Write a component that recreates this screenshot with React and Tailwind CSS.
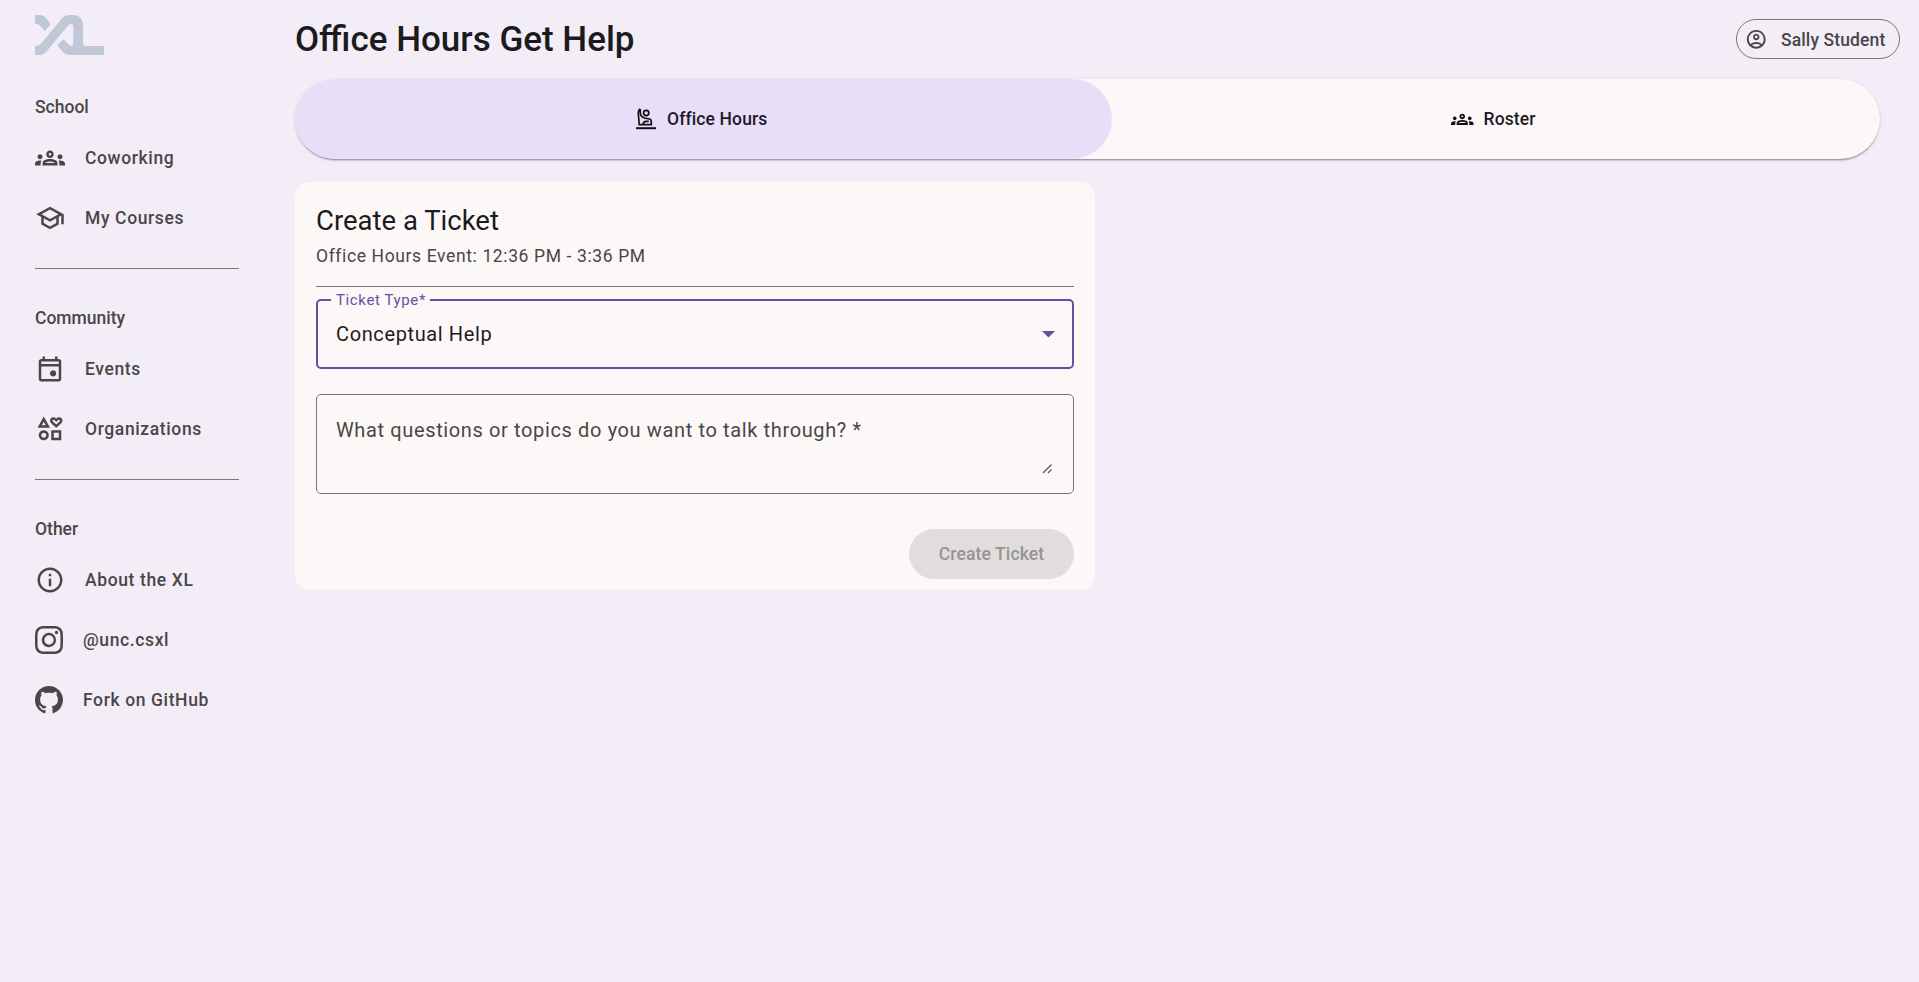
import { MdOutlineGroups, MdOutlineSchool, MdOutlineInterests, MdOutlineInfo, MdOutlineAccountCircle } from "react-icons/md";
import { BsInstagram, BsGithub } from "react-icons/bs";

function Logo() {
  return (
    <svg width="69" height="40" viewBox="0 0 69 40" fill="#c0c8d8" className="block">
      <path d="M0 0H4.5C8 0 9.8 1.6 11.3 3.4L15.8 9.2L10 16L4.6 10.6C3.4 9.4 2.4 9 0 9Z" />
      <path d="M0 40H4.5C7.500 40 9.500 38.800 11.500 36.500L32.500 11.300C34 9.500 35 9 36 9C37.500 9 38.300 10 38.300 11.500V28C38.300 30 37.300 30.800 36 30.800C35 30.800 34.300 30.400 33.500 29.600L28.500 24L22.300 30.600L27.300 36.500C29.500 39 32 40 35 40H69V31H51C49 31 48 30 48 28V10C48 4 44 0 38 0H34.500C31 0 29 1.200 27 3.500L6.500 28C4.500 30.400 3 31 0 31Z" />
    </svg>
  );
}

function EventIcon() {
  return (
    <svg width="30" height="30" viewBox="0 0 24 24" fill="currentColor">
      <path d="M14.500 18Q13.450 18 12.725 17.275T12 15.500Q12 14.450 12.725 13.725T14.500 13Q15.550 13 16.275 13.725T17 15.500Q17 16.550 16.275 17.275T14.500 18ZM5 22Q4.175 22 3.587 21.413T3 20V6Q3 5.175 3.587 4.588T5 4H6V2H8V4H16V2H18V4H19Q19.825 4 20.413 4.588T21 6V20Q21 20.825 20.413 21.413T19 22H5ZM5 20H19V10H5V20ZM5 8H19V6H5V8Z" />
    </svg>
  );
}

function RaisedHandIcon() {
  return (
    <svg width="20" height="22" viewBox="0 0 20 22" fill="none" stroke="#111" strokeWidth="1.7">
      <circle cx="10.200" cy="5" r="2.600" />
      <path d="M3.800 0.800C2 3.500 1.900 6 2.600 8.500L3.200 16.700H15.300V13.200C15.300 12 14.600 11.300 13.400 11L8.500 10C5.500 9 4.300 7 4.300 4.500V1" />
      <path d="M7.200 16.500C7.200 14.500 8.500 13.400 10.200 13.400H12.800" />
      <path d="M0 20.200H20" strokeWidth="2" />
    </svg>
  );
}

const sections = [
  { title: "School", items: [["Coworking", MdOutlineGroups], ["My Courses", MdOutlineSchool]] },
  { title: "Community", items: [["Events", EventIcon], ["Organizations", MdOutlineInterests]] },
  { title: "Other", items: [["About the XL", MdOutlineInfo], ["@unc.csxl", BsInstagram, true], ["Fork on GitHub", BsGithub, true]] },
];

function NavItem({ label, Icon, social }) {
  return (
    <a className="flex h-[60px] items-center text-[17.5px] font-medium tracking-[0.62px]">
      <Icon size={social ? 28 : 30} className="shrink-0" />
      <span className="ml-5">{label}</span>
    </a>
  );
}

function Sidebar() {
  return (
    <nav className="w-[295px] shrink-0 pt-[15px] pl-[35px] text-[#494648]">
      <Logo />
      <div className="mt-[23px]">
        {sections.map((s, i) => (
          <div key={s.title} className="h-[211px]">
            <h3 className="h-[50px] pt-[17px] text-[17.5px] leading-[25px] font-medium">{s.title}</h3>
            {s.items.map(([label, Icon, social]) => (
              <NavItem key={label} label={label} Icon={Icon} social={social} />
            ))}
            {i < 2 && <div className="mt-[20px] h-px w-[204px] bg-[#7a7677]" />}
          </div>
        ))}
      </div>
    </nav>
  );
}

function TicketCard() {
  return (
    <section className="mt-[23px] h-[408px] w-[800px] rounded-[15px] bg-[#fcf8f7] px-[21px] pt-[21px]">
      <h2 className="text-[27.5px] leading-[35px] text-[#1c1b1c]">Create a Ticket</h2>
      <p className="mt-[6px] text-[17.500px] leading-[25px] tracking-[0.62px] text-[#494648]">Office Hours Event: 12:36 PM - 3:36 PM</p>
      <div className="mt-[17px] h-px bg-[#7a7677]" />
      <div className="relative mt-[12px] flex h-[70px] items-center justify-between rounded-[5px] border-2 border-[#6750a4] pr-[17.5px] pl-[18px]">
        <span className="absolute -top-[11px] left-[13px] bg-[#fcf8f7] pr-[4px] pl-[5px] text-[15px] leading-[20px] tracking-[0.62px] text-[#6750a4]">Ticket Type*</span>
        <span className="text-[20px] tracking-[0.62px] text-[#1c1b1c]">Conceptual Help</span>
        <svg width="13" height="7" viewBox="0 0 13 7" fill="#6750a4"><path d="M0 0H13L6.500 6.500Z" /></svg>
      </div>
      <div className="mt-[25px] flex h-[100px] items-start justify-between rounded-[5px] border border-[#7a7677] pr-[20px] pl-[19px]">
        <span className="mt-[20px] text-[20px] leading-[30px] tracking-[0.63px] text-[#494648]">What questions or topics do you want to talk through? *</span>
        <svg className="mt-[69px]" width="11" height="10" viewBox="0 0 11 10" fill="none" stroke="#5a585a" strokeWidth="1.300"><path d="M1 9L9.500 0.500M6 9L9.500 5.500" /></svg>
      </div>
      <div className="mt-[35px] flex justify-end">
        <button className="h-[50px] w-[165px] rounded-full bg-[#e1dddc] text-[17.500px] font-medium tracking-[0.12px] text-[#969394]">Create Ticket</button>
      </div>
    </section>
  );
}

export default function App() {
  return (
    <div className="flex h-[982px] w-full overflow-hidden bg-[#f3edf7] font-[Roboto,sans-serif]">
      <Sidebar />
      <main className="min-w-0 flex-1">
        <header className="flex h-[79px] items-center justify-between pr-[19px]">
          <h1 className="text-[35px] leading-[45px] font-medium text-[#1c1b1c]">Office Hours Get Help</h1>
          <button className="-mt-px flex h-[40px] w-[164px] items-center rounded-full border border-[#7a7677] pl-[8px] text-[17.500px] font-medium tracking-[0.12px] text-[#494648]">
            <MdOutlineAccountCircle size={22.5} />
            <span className="ml-[13.5px] pt-[2px] whitespace-nowrap">Sally Student</span>
          </button>
        </header>
        <div className="mr-[39px] flex h-[80px] rounded-full bg-[#fcf8f7] text-[17.500px] font-medium tracking-[0.12px] text-[#1d192b] shadow-[0_2.5px_1.25px_-1.25px_rgba(0,0,0,0.2),0_1.25px_1.25px_0_rgba(0,0,0,0.14),0_1.25px_3.75px_0_rgba(0,0,0,0.12)]">
          <div className="flex w-[817px] items-center rounded-full bg-[#e8def8] pl-[341px]">
            <RaisedHandIcon />
            <span className="ml-[11px]">Office Hours</span>
          </div>
          <div className="flex items-center pl-[339px]">
            <MdOutlineGroups size={22.5} color="#111" />
            <span className="ml-[10px]">Roster</span>
          </div>
        </div>
        <TicketCard />
      </main>
    </div>
  );
}
